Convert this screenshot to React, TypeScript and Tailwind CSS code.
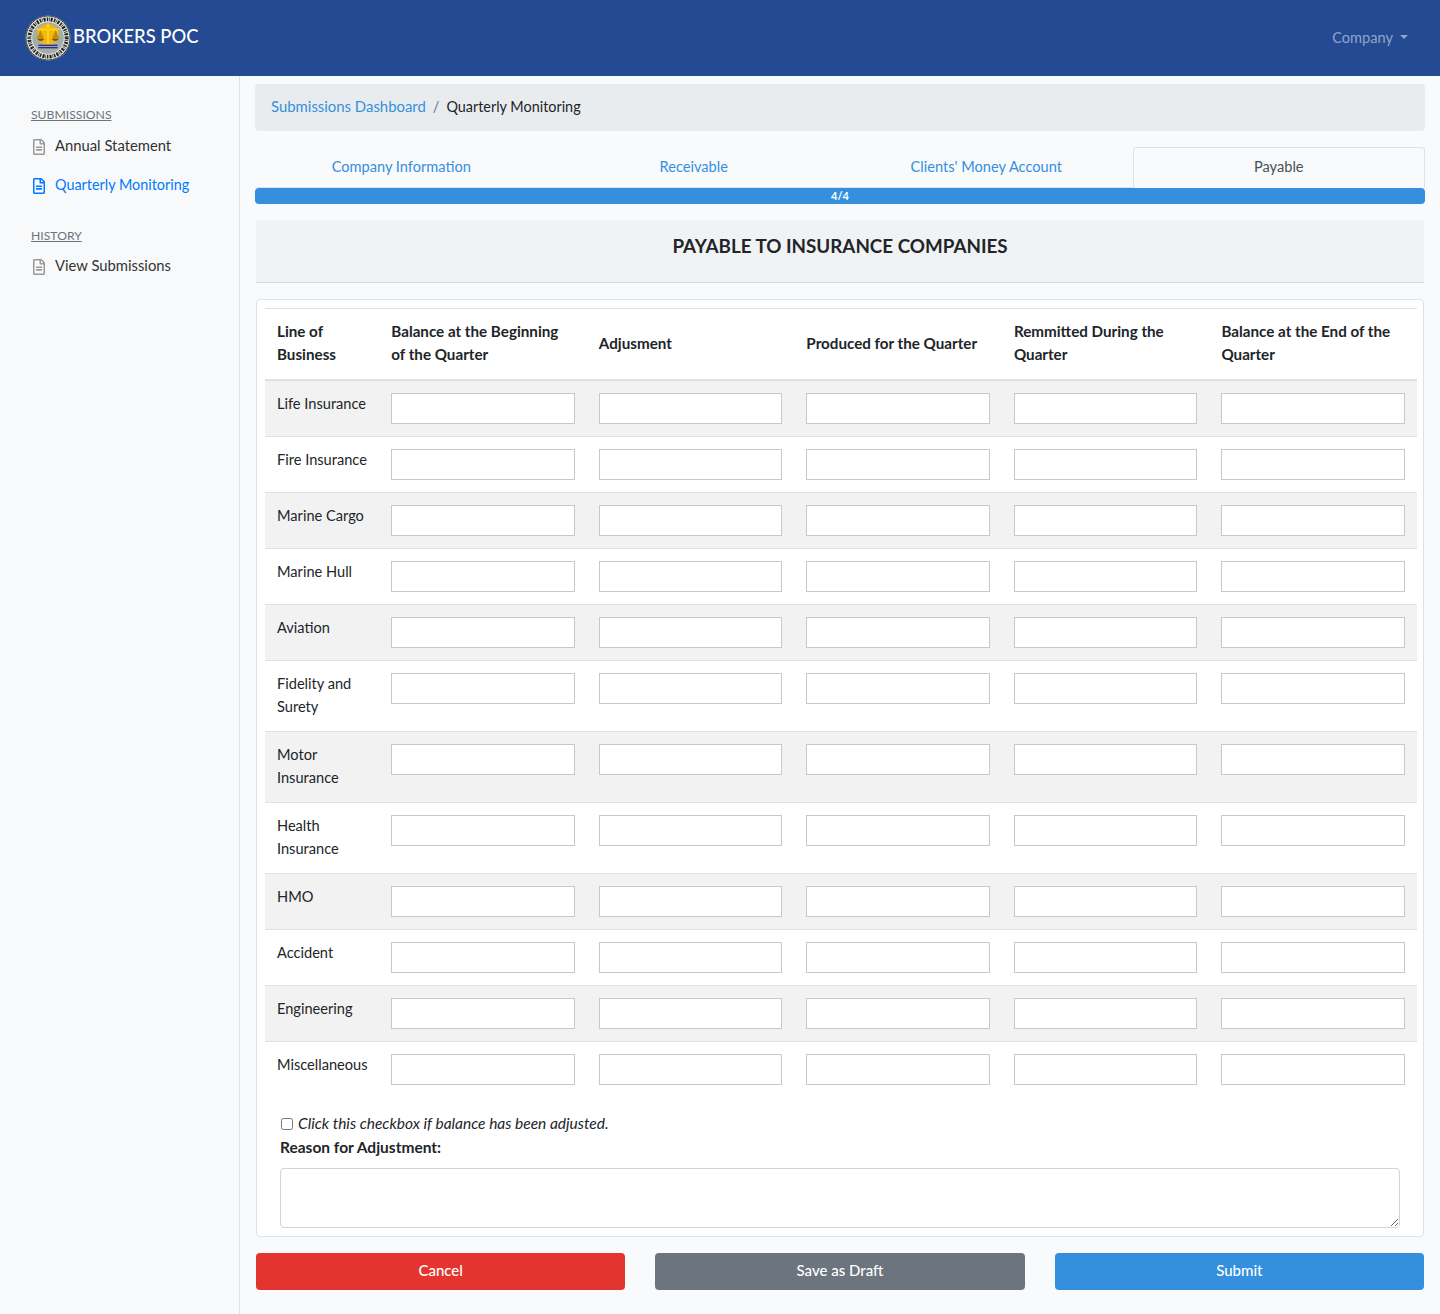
import { FaRegFileAlt } from "react-icons/fa"

const lines = [
  "Life Insurance",
  "Fire Insurance",
  "Marine Cargo",
  "Marine Hull",
  "Aviation",
  "Fidelity and Surety",
  "Motor Insurance",
  "Health Insurance",
  "HMO",
  "Accident",
  "Engineering",
  "Miscellaneous",
]

const columns = [
  "Balance at the Beginning of the Quarter",
  "Adjusment",
  "Produced for the Quarter",
  "Remmitted During the Quarter",
  "Balance at the End of the Quarter",
]

const tabs = ["Company Information", "Receivable", "Clients' Money Account"]

function Logo() {
  return (
    <svg viewBox="0 0 48 48" className="h-[46px] w-[46px] shrink-0">
      <circle cx="24" cy="24" r="23.5" fill="#e6e9e1" />
      <circle cx="24" cy="24" r="23" fill="none" stroke="#33383a" strokeWidth="1" />
      <circle cx="24" cy="24" r="19.5" fill="none" stroke="#23272b" strokeWidth="4" strokeDasharray="1.6 0.9 0.7 0.9 2.2 1.2" />
      <circle cx="24" cy="24" r="16.5" fill="#a5aea5" />
      <circle cx="24" cy="20.5" r="11" fill="#f3b80f" />
      <path d="M24 8l2.5 5h-5zM12 14h24v2H12zM23 14h2v16h-2z" fill="#ffd21a" />
      <path d="M16 16l-4 9h8zM32 16l-4 9h8z" fill="#c48a10" />
      <path d="M13 25a4 4 0 0 0 7 0zM28 25a4 4 0 0 0 7 0z" fill="#6f5a14" />
      <rect x="14" y="31" width="20" height="1.4" fill="#2a2a9c" />
      <rect x="14" y="33.4" width="20" height="1.4" fill="#2a2a9c" />
    </svg>
  )
}

function SideItem({ label, active }: { label: string; active?: boolean }) {
  return (
    <a className={`flex h-[23px] items-center gap-[10px] pl-[33px] ${active ? "text-[14.4px] text-[#007bff]" : "text-[14.8px] text-[#333]"}`}>
      <FaRegFileAlt className={`mt-[2px] h-[16px] w-[12px] ${active ? "text-[#007bff]" : "text-[#999]"}`} />
      <span>{label}</span>
    </a>
  )
}

function Sidebar() {
  return (
    <aside className="w-[240px] shrink-0 border-r border-[#dee2e6] bg-[#f8f9fa] pt-[28px]">
      <div className="pl-[31px] text-[12.2px] leading-[22px] text-[#6c757d] underline">SUBMISSIONS</div>
      <div className="mt-[8px]">
        <SideItem label="Annual Statement" />
      </div>
      <div className="mt-[16px]">
        <SideItem active label="Quarterly Monitoring" />
      </div>
      <div className="mt-[29px] pl-[31px] text-[12.2px] leading-[22px] text-[#6c757d] underline">HISTORY</div>
      <div className="mt-[7px]">
        <SideItem label="View Submissions" />
      </div>
    </aside>
  )
}

function PayableTable() {
  return (
    <table className="ml-[8px] mt-[8px] w-[1152px] table-fixed border-t border-[#dee2e6]">
      <colgroup>
        <col className="w-[114.3px]" />
        <col />
        <col />
        <col />
        <col />
        <col />
      </colgroup>
      <thead>
        <tr className="border-b-2 border-[#dee2e6]">
          <th className="px-[12px] pb-[13px] pt-[11px] text-left align-middle text-[15.2px] font-bold">Line of Business</th>
          {columns.map((c) => (
            <th key={c} className="px-[12px] pb-[13px] pt-[11px] text-left align-middle text-[15.2px] font-bold">
              <span className="block max-w-[178px]">{c}</span>
            </th>
          ))}
        </tr>
      </thead>
      <tbody>
        {lines.map((line, i) => (
          <tr key={line} className={`border-b border-[#dee2e6] last:border-b-0 ${i % 2 === 0 ? "bg-[#f2f2f2]" : ""}`}>
            <td className="px-[12px] pb-[13px] pt-[11px] align-top">{line}</td>
            {columns.map((c) => (
              <td key={c} className="p-[12px] align-top">
                <input className="block h-[31px] w-full border border-[#c8c8c8] bg-white" />
              </td>
            ))}
          </tr>
        ))}
      </tbody>
    </table>
  )
}

export default function App() {
  return (
    <div className="flex h-[1314px] flex-col overflow-hidden bg-[#f8fafc] font-['Lato',sans-serif] text-[14.6px] leading-[23px] text-[#212529]">
      <header className="flex h-[76px] shrink-0 items-center justify-between bg-[#234a92] pl-[25px] pr-[32px]">
        <div className="flex items-center gap-[2px] text-[18.4px] font-medium text-white">
          <Logo />
          <span className="mb-[4px]">BROKERS POC</span>
        </div>
        <div className="mb-[2px] flex items-center gap-[7px] text-[rgba(255,255,255,0.5)]">
          <span>Company</span>
          <span className="h-0 w-0 border-x-[4px] border-t-[4px] border-x-transparent border-t-[rgba(255,255,255,0.5)]" />
        </div>
      </header>

      <div className="flex flex-1">
        <Sidebar />
        <main className="w-[1200px] pl-[15px] pr-[15px] pt-[8px]">
          <nav className="flex h-[47px] items-center rounded bg-[#e9ecef] px-[16px] pb-[2px]">
            <a className="text-[14.9px] text-[#3490dc]">Submissions Dashboard</a>
            <span className="px-[7px] text-[#6c757d]">/</span>
            <span className="text-[14.4px]">Quarterly Monitoring</span>
          </nav>

          <div className="mt-[16px] grid h-[41px] grid-cols-4 border-b border-[#dee2e6] text-center">
            {tabs.map((t) => (
              <a key={t} className="pt-[8px] text-[#3490dc]">
                {t}
              </a>
            ))}
            <a className="-mb-px rounded-t border border-b-0 border-[#dee2e6] bg-[#f8fafc] pt-[7px] text-[#495057]">Payable</a>
          </div>
          <div className="flex h-[16px] items-center justify-center rounded bg-[#3490dc] pb-[1px] text-[11px] font-bold text-white">4/4</div>

          <div className="mx-px mt-[16px] flex h-[63px] items-center justify-center rounded-t border-b border-[#d6d8da] bg-[#f1f2f4] pb-[11px] text-[18.8px] font-bold">
            PAYABLE TO INSURANCE COMPANIES
          </div>

          <section className="mx-px mt-[16px] rounded border border-[#dee2e6] bg-white pb-[8px]">
            <PayableTable />
            <div className="px-[23px] pt-[15px]">
              <label className="flex h-[23px] items-center text-[15.5px] italic">
                <input type="checkbox" className="ml-px mr-[5px] h-[12px] w-[12px] appearance-auto" />
                Click this checkbox if balance has been adjusted.
              </label>
              <div className="mt-px text-[15.5px] font-bold">Reason for Adjustment:</div>
              <textarea className="mt-[9px] block h-[60px] w-[1120px] rounded border border-[#ced4da]" />
            </div>
          </section>

          <div className="mx-px mt-[16px] grid grid-cols-3 gap-[30px] text-[15px] font-medium text-white">
            <button className="h-[37px] rounded bg-[#e3342f] pb-[2px]">Cancel</button>
            <button className="h-[37px] rounded bg-[#6c757d] pb-[2px]">Save as Draft</button>
            <button className="h-[37px] rounded bg-[#3490dc] pb-[2px]">Submit</button>
          </div>
        </main>
      </div>
    </div>
  )
}
